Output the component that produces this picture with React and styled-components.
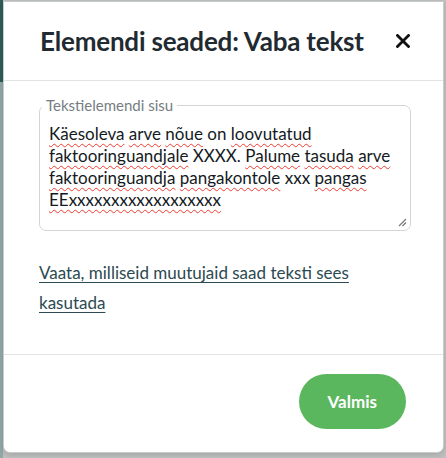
import styled, { createGlobalStyle } from "styled-components"

const GlobalStyle = createGlobalStyle`
  html, body {
    margin: 0;
    padding: 0;
  }
  body {
    font-family: "Lato", "Noto Sans", sans-serif;
    width: 446px;
    height: 458px;
    overflow: hidden;
  }
  * {
    box-sizing: border-box;
  }
`

const Backdrop = styled.div`
  width: 446px;
  height: 458px;
  padding: 1px 2px 5px 3px;
  background:
    linear-gradient(to bottom, #2f5b5b 0 82px, #93a8a8 82px) left top / 3px 100% no-repeat,
    #bfc0c0;
`

const Modal = styled.div`
  height: 100%;
  display: flex;
  flex-direction: column;
  background: #fff;
  border: 1px solid #c9cccd;
  border-radius: 0 0 7px 7px;
  box-shadow: 0 2px 6px rgba(0, 0, 0, 0.15);
`

const Header = styled.div`
  height: 79px;
  display: flex;
  align-items: center;
  justify-content: space-between;
  padding: 0 30px 0 36px;
  border-bottom: 1px solid #e1e3e5;
`

const Title = styled.h2`
  margin: 0;
  font-size: 26px;
  font-weight: 700;
  color: #1f2b31;
  letter-spacing: -0.2px;
`

const CloseButton = styled.button`
  border: 0;
  background: none;
  padding: 0;
  width: 20px;
  height: 20px;
  display: flex;
  align-items: center;
  justify-content: center;
  cursor: pointer;
`

const Body = styled.div`
  flex: 1;
  padding: 15px 32px 0 35px;
  border-bottom: 1px solid #e1e3e5;
`

const Field = styled.fieldset`
  position: relative;
  margin: 0;
  padding: 9px 10px 0 9px;
  height: 135px;
  border: 1px solid #d3d6d8;
  border-radius: 7px;
`

const Legend = styled.legend`
  padding: 0 4px;
  margin-left: -7px;
  font-size: 15px;
  color: #757d82;
`

const TextContent = styled.div`
  font-size: 17px;
  line-height: 22px;
  color: #141a1e;
`

const Misspelled = styled.span`
  text-decoration: underline wavy #ee3b2f;
  text-decoration-thickness: 1.3px;
  text-underline-offset: 3px;
  text-decoration-skip-ink: none;
`

const Grip = styled.svg`
  position: absolute;
  right: 3px;
  bottom: 3px;
`

const HelpLink = styled.a`
  display: block;
  margin-top: 27px;
  max-width: 360px;
  font-size: 17px;
  line-height: 30px;
  color: #2b4a51;
  text-decoration: underline;
  text-underline-offset: 3px;
  cursor: pointer;
`

const Footer = styled.div`
  height: 97px;
  display: flex;
  align-items: center;
  justify-content: flex-end;
  padding: 0 37px 4px 0;
`

const PrimaryButton = styled.button`
  height: 55px;
  padding: 0 29px;
  border: 0;
  border-radius: 28px;
  background: #5bb75e;
  color: #fff;
  font-family: inherit;
  font-size: 17px;
  font-weight: 700;
  cursor: pointer;
`

const lines = [
  [["Käesoleva", true], ["arve", true], ["nõue", true], ["on", false], ["loovutatud", true]],
  [["faktooringuandjale", true], ["XXXX.", false], ["Palume", true], ["tasuda", true], ["arve", true]],
  [["faktooringuandja", true], ["pangakontole", true], ["xxx", false], ["pangas", true]],
  [["EExxxxxxxxxxxxxxxxxx", true]],
]

export default function App() {
  return (
    <>
      <GlobalStyle />
      <Backdrop>
        <Modal>
          <Header>
            <Title>Elemendi seaded: Vaba tekst</Title>
            <CloseButton aria-label="Sulge">
              <svg width="14" height="14" viewBox="0 0 14 14">
                <path
                  d="M1.5 1.5 L12.5 12.5 M12.5 1.5 L1.5 12.5"
                  stroke="#111"
                  strokeWidth="2.8"
                  strokeLinecap="square"
                />
              </svg>
            </CloseButton>
          </Header>
          <Body>
            <Field>
              <Legend>Tekstielemendi sisu</Legend>
              <TextContent>
                {lines.map((line, i) => (
                  <div key={i}>
                    {line.map(([word, wrong], j) => (
                      <span key={j}>
                        {j > 0 && " "}
                        {wrong ? <Misspelled>{word}</Misspelled> : word}
                      </span>
                    ))}
                  </div>
                ))}
              </TextContent>
              <Grip width="9" height="9" viewBox="0 0 9 9">
                <path d="M8 1 L1 8 M8 4.5 L4.5 8" stroke="#777" strokeWidth="1.2" />
              </Grip>
            </Field>
            <HelpLink>Vaata, milliseid muutujaid saad teksti sees kasutada</HelpLink>
          </Body>
          <Footer>
            <PrimaryButton>Valmis</PrimaryButton>
          </Footer>
        </Modal>
      </Backdrop>
    </>
  )
}
